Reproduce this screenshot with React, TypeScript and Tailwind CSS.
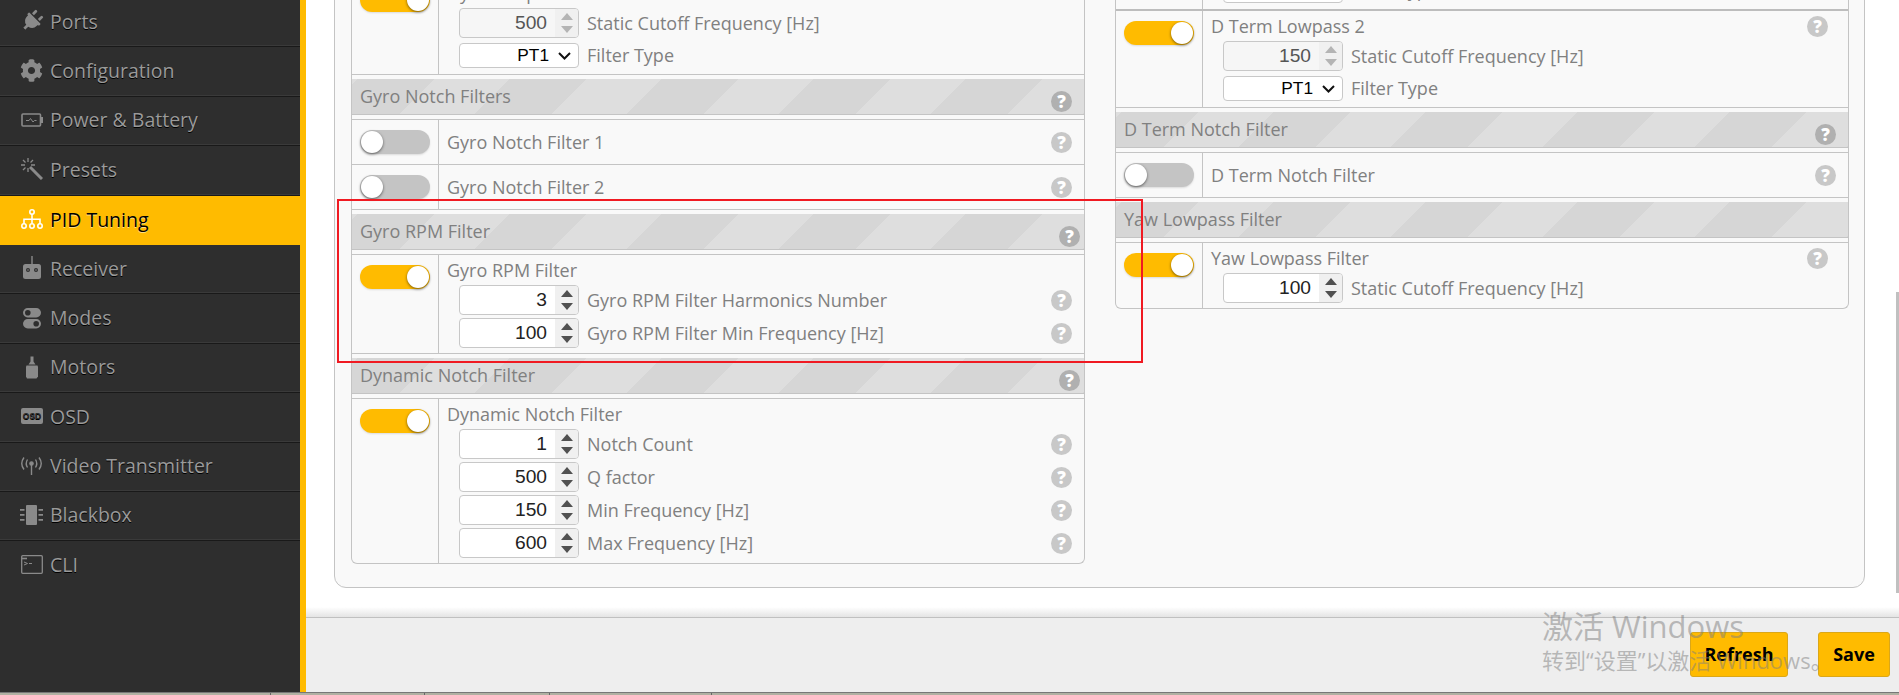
import React from 'react';
import { FaPlug, FaCog } from 'react-icons/fa';

const PlugIcon = () => <FaPlug size={22} className="rotate-45" />;
const CogIcon = () => <FaCog size={23} />;

const WandIcon = () => (
  <svg width="22" height="22" viewBox="0 0 22 22" fill="none" stroke="currentColor">
    <path d="M9 9l12 12" strokeWidth="3" />
    <path d="M7 0v4M7 10v4M0 7h4M10 7h4M2 2l2.500 2.500M12 2L9.500 4.500M2 12l2.500-2.500" strokeWidth="1.300" />
  </svg>
);

const BatteryIcon = () => (
  <svg width="22" height="14" viewBox="0 0 22 14" fill="none" stroke="currentColor">
    <rect x="1" y="1" width="18.5" height="12" rx="1" strokeWidth="1.6" />
    <rect x="20" y="4" width="2" height="6" fill="currentColor" stroke="none" />
    <path d="M5 7.5h3l1.5-2 2.5 3.5 1.5-1.5h2" strokeWidth="1" />
  </svg>
);

const SitemapIcon = () => (
  <svg width="22" height="22" viewBox="0 0 22 22" fill="none" stroke="currentColor" strokeWidth="1.6">
    <circle cx="11" cy="4" r="2.2" />
    <path d="M11 6.2V13M3 15.5V11.2H19V15.5M11 11v4" />
    <circle cx="3" cy="18" r="2.2" />
    <circle cx="11" cy="18" r="2.2" />
    <circle cx="19" cy="18" r="2.2" />
  </svg>
);

const ReceiverIcon = () => (
  <svg width="20" height="24" viewBox="0 0 20 24" fill="currentColor">
    <rect x="9.3" y="0" width="1.4" height="9" />
    <rect x="1" y="8" width="18" height="15" rx="2.5" />
    <circle cx="6" cy="14" r="2" fill="#2e2e2e" />
    <circle cx="14" cy="14" r="2" fill="#2e2e2e" />
    <circle cx="6" cy="14" r="0.8" />
    <circle cx="14" cy="14" r="0.8" />
  </svg>
);

const ModesIcon = () => (
  <svg width="20" height="22" viewBox="0 0 20 22" fill="currentColor">
    <rect x="1" y="1" width="18" height="9.5" rx="4.7" />
    <circle cx="5.8" cy="5.7" r="2.8" fill="#2e2e2e" />
    <rect x="1" y="12" width="18" height="9.5" rx="4.7" />
    <circle cx="14.2" cy="16.7" r="2.8" fill="#2e2e2e" />
  </svg>
);

const MotorIcon = () => (
  <svg width="16" height="24" viewBox="0 0 16 24" fill="currentColor">
    <path d="M6.5 1.5h3V6.5l2 3H4.5l2-3z" />
    <path d="M2.5 10.5h11l.5 1.5v9.5l-1.5 2h-9.500l-1-2V12z" />
  </svg>
);

const OsdIcon = () => (
  <svg width="22" height="16" viewBox="0 0 22 16">
    <rect x="0" y="0" width="22" height="16" rx="2" fill="currentColor" />
    <text x="11" y="11" textAnchor="middle" fontSize="8.500" fontWeight="700" fontFamily="'Liberation Sans', sans-serif" fill="#2e2e2e">OSD</text>
  </svg>
);

const VtxIcon = () => (
  <svg width="23" height="20" viewBox="0 0 23 20" fill="none" stroke="currentColor" strokeWidth="1.4">
    <circle cx="11.500" cy="7.500" r="1.600" fill="currentColor" />
    <path d="M11.500 8v11" />
    <path d="M7.500 3.500q-2.500 4 0 8M15.500 3.500q2.500 4 0 8" />
    <path d="M4 1.500q-4.500 6 0 12M19 1.500q4.500 6 0 12" />
  </svg>
);

const BlackboxIcon = () => (
  <svg width="23" height="20" viewBox="0 0 23 20" fill="currentColor">
    <rect x="6" y="0" width="11" height="20" rx="1" />
    <path d="M0 4h4.500v1.800H0zM0 9h4.500v1.800H0zM0 14h4.500v1.800H0zM18.500 4H23v1.800h-4.500zM18.500 9H23v1.800h-4.500zM18.500 14H23v1.800h-4.500z" />
  </svg>
);

const CliIcon = () => (
  <svg width="22" height="19" viewBox="0 0 22 19" fill="none" stroke="currentColor">
    <rect x="0.700" y="0.700" width="20.600" height="17.600" rx="1" strokeWidth="1.300" />
    <path d="M1 3.500h5" strokeWidth="1.600" />
    <path d="M3 7l3.500 1.500L3 10M8 8.500h3" strokeWidth="1" />
  </svg>
);

const navItems = [
  { label: 'Ports', icon: <PlugIcon /> },
  { label: 'Configuration', icon: <CogIcon /> },
  { label: 'Power & Battery', icon: <BatteryIcon /> },
  { label: 'Presets', icon: <WandIcon /> },
  { label: 'PID Tuning', icon: <SitemapIcon />, active: true },
  { label: 'Receiver', icon: <ReceiverIcon /> },
  { label: 'Modes', icon: <ModesIcon /> },
  { label: 'Motors', icon: <MotorIcon /> },
  { label: 'OSD', icon: <OsdIcon /> },
  { label: 'Video Transmitter', icon: <VtxIcon /> },
  { label: 'Blackbox', icon: <BlackboxIcon /> },
  { label: 'CLI', icon: <CliIcon /> },
];

const Toggle = ({ on }: { on: boolean }) => (
  <div className={`relative h-6 w-[70px] rounded-full shadow-[0_1px_2px_rgba(0,0,0,0.12)] ${on ? 'bg-[#ffbb00]' : 'bg-[#c4c4c4]'}`}>
    <div
      className={`absolute top-[1px] h-[22px] w-[22px] rounded-full bg-white shadow-[0_1px_3px_rgba(0,0,0,0.55)] ${on ? 'right-[1px]' : 'left-[1px]'}`}
    />
  </div>
);

const Help = ({ dark }: { dark?: boolean }) => (
  <div
    className={`flex h-[21px] w-[21px] shrink-0 items-center justify-center rounded-full text-[17px] leading-none font-extrabold text-white ${dark ? 'bg-[#b0b0b0]' : 'bg-[#c8c8c8]'}`}
  >
    ?
  </div>
);

const NumberBox = ({ value, disabled }: { value: number; disabled?: boolean }) => (
  <div
    className={`flex h-[30px] w-[120px] shrink-0 overflow-hidden rounded-[4px] border border-[#c8c8c8] font-['Liberation_Sans',sans-serif] text-[19.2px] ${disabled ? 'bg-[#f6f6f6] text-[#555]' : 'bg-white text-[#222]'}`}
  >
    <div className="flex flex-1 items-center justify-end pr-2">{value}</div>
    <div className="flex w-[23px] flex-col items-center justify-center gap-[6px] bg-[#f0f0f0]">
      <svg width="12" height="7" viewBox="0 0 12 7" fill={disabled ? '#b4b4b4' : '#505050'}>
        <path d="M6 0l6 7H0z" />
      </svg>
      <svg width="12" height="7" viewBox="0 0 12 7" fill={disabled ? '#b4b4b4' : '#505050'}>
        <path d="M0 0h12L6 7z" />
      </svg>
    </div>
  </div>
);

const SelectBox = () => (
  <div className="flex h-[25px] w-[120px] shrink-0 items-center justify-end gap-[9px] rounded-[4px] border border-[#c8c8c8] bg-white pr-[7px] font-['Liberation_Sans',sans-serif] text-[17.3px] text-black">
    <span>PT1</span>
    <svg width="13" height="8" viewBox="0 0 13 8" fill="none" stroke="#111" strokeWidth="2">
      <path d="M1 1l5.500 5.500L12 1" />
    </svg>
  </div>
);

const Line = ({ children, help, gap }: { children: React.ReactNode; help?: boolean; gap: string }) => (
  <div className={`flex items-center justify-between ${gap}`}>
    <div className="flex items-center">{children}</div>
    {help && <Help />}
  </div>
);

const SubRow = ({ control, label, help = true, gap = 'pr-[12px]' }: { control: React.ReactNode; label: string; help?: boolean; gap?: string }) => (
  <Line help={help} gap={`ml-[12px] ${gap}`}>
    {control}
    <span className="ml-2">{label}</span>
  </Line>
);

const FilterType = () => (
  <Line gap="mt-[2px] mb-[1px] ml-[12px]">
    <SelectBox />
    <span className="ml-2 leading-[25px]">Filter Type</span>
  </Line>
);

const Row = ({ on, label, help, gap = 'pr-[12px]', children, last }: { on: boolean; label: string; help?: boolean; gap?: string; children?: React.ReactNode; last?: boolean }) => (
  <div className={`flex ${last ? '' : 'border-b border-[#c4c4c4]'}`}>
    <div className="w-[87px] shrink-0 border-r border-[#c4c4c4] pt-[10px] pl-2">
      <Toggle on={on} />
    </div>
    <div className="min-w-0 flex-1 pl-2">
      {children ? (
        <>
          <Line help={help} gap={`h-[30px] ${gap}`}>
            {label}
          </Line>
          <div className="flex flex-col gap-[3px] pb-[5px]">{children}</div>
        </>
      ) : (
        <Line help={help} gap={`h-[44px] ${gap}`}>
          {label}
        </Line>
      )}
    </div>
  </div>
);

const Header = ({ title, help, helpPad = 'pr-[12px]' }: { title: string; help?: boolean; helpPad?: string }) => (
  <div className="mt-1">
    <div
      className={`flex h-[36px] items-center justify-between border-b border-[#c4c4c4] bg-[repeating-linear-gradient(135deg,#dedede_0px,#dedede_4px,#d6d6d6_4px,#d6d6d6_58px,#dedede_58px,#dedede_107.5px)] pl-2 ${helpPad}`}
    >
      <span>{title}</span>
      {help && (
        <div className="mt-[9px]">
          <Help dark />
        </div>
      )}
    </div>
    <div className="h-[5px] border-b border-[#c4c4c4] bg-[#f9f9f9]" />
  </div>
);

export default function App() {
  return (
    <div className="relative flex h-[695px] w-[1899px] flex-col overflow-hidden bg-white font-['Open_Sans',sans-serif] text-[18px] text-[#808080]">
      <div className="flex min-h-0 flex-1">
        {/* Sidebar */}
        <aside className="w-[306px] shrink-0 overflow-hidden border-r-[6px] border-[#ffbb00] bg-[#2e2e2e]">
          <div className="-mt-[2px]">
            {navItems.map((item, i) => (
              <div
                key={item.label}
                className={`flex h-[49.4px] items-center pb-[2px] ${
                  item.active
                    ? 'bg-[#ffbb00] text-black [text-shadow:0_1px_0_rgba(255,255,255,0.5)]'
                    : `text-[#9a9a9a] [text-shadow:0_1px_0_#000] ${i < navItems.length - 1 ? 'border-b border-b-[#191919] shadow-[inset_0_-1px_0_#3a3a3a]' : ''}`
                }`}
              >
                <div className={`flex w-[62px] shrink-0 justify-center pl-[1px] ${item.active ? 'text-white' : 'text-[#8a8a8a]'}`}>{item.icon}</div>
                <span className="-ml-[12px] text-[19.5px]">{item.label}</span>
              </div>
            ))}
          </div>
        </aside>

        {/* Content */}
        <main className="relative flex min-w-0 flex-1 flex-col overflow-hidden">
          <div className="relative flex-1 overflow-hidden pr-[34px] pl-[28px]">
            <div className="-mt-[23px] flex justify-between rounded-b-[12px] border border-[#c4c4c4] bg-[#f9f9f9] pr-[15px] pb-[23px] pl-[16px]">
              {/* Left column */}
              <div className="w-[734px] self-start rounded-b-[6px] border-x border-b border-[#c4c4c4]">
                <Row on label="Gyro Lowpass 2">
                  <SubRow control={<NumberBox value={500} disabled />} label="Static Cutoff Frequency [Hz]" help={false} />
                  <FilterType />
                </Row>
                <Header title="Gyro Notch Filters" help />
                <Row on={false} label="Gyro Notch Filter 1" help />
                <Row on={false} label="Gyro Notch Filter 2" help />
                <Header title="Gyro RPM Filter" help helpPad="pr-[4px]" />
                <Row on label="Gyro RPM Filter">
                  <SubRow control={<NumberBox value={3} />} label="Gyro RPM Filter Harmonics Number" />
                  <SubRow control={<NumberBox value={100} />} label="Gyro RPM Filter Min Frequency [Hz]" />
                </Row>
                <Header title="Dynamic Notch Filter" help helpPad="pr-[4px]" />
                <Row on label="Dynamic Notch Filter" last>
                  <SubRow control={<NumberBox value={1} />} label="Notch Count" />
                  <SubRow control={<NumberBox value={500} />} label="Q factor" />
                  <SubRow control={<NumberBox value={150} />} label="Min Frequency [Hz]" />
                  <SubRow control={<NumberBox value={600} />} label="Max Frequency [Hz]" />
                </Row>
              </div>

              {/* Right column */}
              <div className="w-[734px] self-start rounded-b-[6px] border-x border-b border-[#c4c4c4]">
                <div className="flex h-[33px] border-b-2 border-[#bdbdbd]">
                  <div className="w-[87px] shrink-0 border-r border-[#c4c4c4]" />
                  <div className="flex pl-[20px]">
                    <SelectBox />
                    <span className="ml-2 leading-[25px]">Filter Type</span>
                  </div>
                </div>
                <Row on label="D Term Lowpass 2" help gap="pr-[20px]">
                  <SubRow control={<NumberBox value={150} disabled />} label="Static Cutoff Frequency [Hz]" help={false} />
                  <FilterType />
                </Row>
                <Header title="D Term Notch Filter" help />
                <Row on={false} label="D Term Notch Filter" help />
                <Header title="Yaw Lowpass Filter" />
                <Row on label="Yaw Lowpass Filter" help gap="pr-[20px]" last>
                  <SubRow control={<NumberBox value={100} />} label="Static Cutoff Frequency [Hz]" help={false} />
                </Row>
              </div>
            </div>
            <div className="absolute inset-x-0 bottom-0 h-[10px] bg-gradient-to-b from-transparent to-[#e4e4e4]" />
          </div>

          {/* Toolbar */}
          <div className="flex h-[75px] shrink-0 items-center justify-end gap-[30px] border-t border-[#c0c0c0] bg-[#eeeeee] pr-[9px] pb-[1px]">
            <button className="h-[45px] w-[98px] rounded-[3px] border border-[#dba718] bg-[#ffbb00] text-[18px] font-bold text-black">Refresh</button>
            <button className="h-[45px] w-[72px] rounded-[3px] border border-[#dba718] bg-[#ffbb00] text-[18px] font-bold text-black">Save</button>
          </div>

          {/* Scrollbar thumb */}
          <div className="absolute top-[292px] right-0 h-[301px] w-[3px] bg-[#c0c0c0]" />
        </main>
      </div>

      {/* Window bottom edge */}
      <div className="flex h-[3px] shrink-0 border-t border-[#777] bg-[#b0b0a2]">
        <div className="w-[271px] border-r border-[#666]" />
        <div className="w-[154px] border-r border-[#666]" />
        <div className="w-[125px] border-r border-[#666]" />
        <div className="w-[162px] border-r border-[#666]" />
      </div>

      {/* Selection highlight drawn over the screenshot */}
      <div className="pointer-events-none absolute top-[199px] left-[337px] h-[164px] w-[806px] border-2 border-[#f01a22]" />

      {/* Windows activation watermark */}
      <div className="pointer-events-none absolute top-[608px] left-[1542px] font-['Open_Sans','Noto_Sans_CJK_SC',sans-serif] text-[#7f7f7f]/50">
        <div className="text-[31px] leading-[36px] whitespace-nowrap">激活 Windows</div>
        <div className="text-[22px] leading-[32px] whitespace-nowrap">转到“设置”以激活 Windows。</div>
      </div>
    </div>
  );
}
